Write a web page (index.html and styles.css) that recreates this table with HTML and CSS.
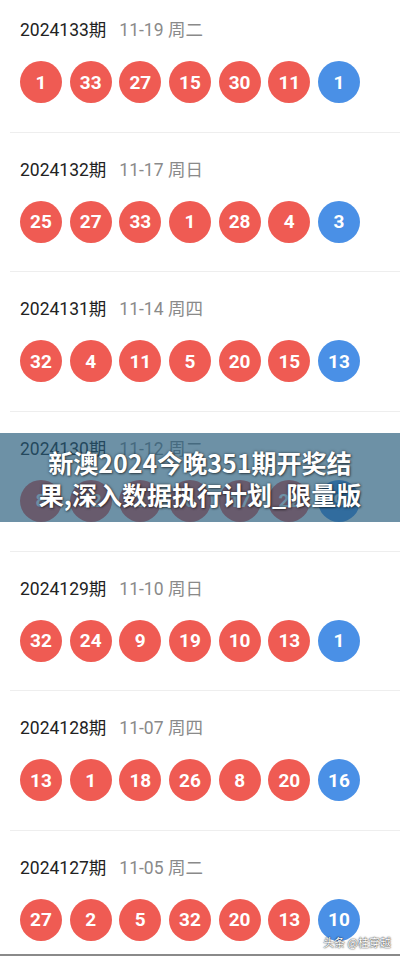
FILE: index.html
```html
<!DOCTYPE html>
<html lang="zh-CN">
<head>
<meta charset="utf-8">
<link rel="stylesheet" href="styles.css">
</head>
<body>
<div class="page">
  <ul class="draws">
    <li class="draw">
      <div class="head"><span class="issue">2024133期</span><span class="date">11-19 周二</span></div>
      <div class="balls"><span class="ball">1</span><span class="ball">33</span><span class="ball">27</span><span class="ball">15</span><span class="ball">30</span><span class="ball">11</span><span class="ball blue">1</span></div>
    </li>
    <li class="draw">
      <div class="head"><span class="issue">2024132期</span><span class="date">11-17 周日</span></div>
      <div class="balls"><span class="ball">25</span><span class="ball">27</span><span class="ball">33</span><span class="ball">1</span><span class="ball">28</span><span class="ball">4</span><span class="ball blue">3</span></div>
    </li>
    <li class="draw">
      <div class="head"><span class="issue">2024131期</span><span class="date">11-14 周四</span></div>
      <div class="balls"><span class="ball">32</span><span class="ball">4</span><span class="ball">11</span><span class="ball">5</span><span class="ball">20</span><span class="ball">15</span><span class="ball blue">13</span></div>
    </li>
    <li class="draw">
      <div class="head"><span class="issue">2024130期</span><span class="date">11-12 周二</span></div>
      <div class="balls"><span class="ball">8</span><span class="ball">12</span><span class="ball">3</span><span class="ball">6</span><span class="ball">17</span><span class="ball">22</span><span class="ball blue">9</span></div>
    </li>
    <li class="draw">
      <div class="head"><span class="issue">2024129期</span><span class="date">11-10 周日</span></div>
      <div class="balls"><span class="ball">32</span><span class="ball">24</span><span class="ball">9</span><span class="ball">19</span><span class="ball">10</span><span class="ball">13</span><span class="ball blue">1</span></div>
    </li>
    <li class="draw">
      <div class="head"><span class="issue">2024128期</span><span class="date">11-07 周四</span></div>
      <div class="balls"><span class="ball">13</span><span class="ball">1</span><span class="ball">18</span><span class="ball">26</span><span class="ball">8</span><span class="ball">20</span><span class="ball blue">16</span></div>
    </li>
    <li class="draw">
      <div class="head"><span class="issue">2024127期</span><span class="date">11-05 周二</span></div>
      <div class="balls"><span class="ball">27</span><span class="ball">2</span><span class="ball">5</span><span class="ball">32</span><span class="ball">20</span><span class="ball">13</span><span class="ball blue">10</span></div>
    </li>
  </ul>
  <div class="banner">
    <span class="banner-line">新澳2024今晚351期开奖结</span>
    <span class="banner-line">果,深入数据执行计划_限量版</span>
  </div>
  <div class="watermark">头条 @桂穿越</div>
</div>
</body>
</html>
```

FILE: styles.css
```css
* { box-sizing: border-box; }
html, body {
  margin: 0;
  padding: 0;
  background: #ffffff;
}
body {
  font-family: Roboto, "Noto Sans CJK SC", sans-serif;
}
.page {
  position: relative;
  width: 400px;
  height: 956px;
  overflow: hidden;
  background: #ffffff;
  border-bottom: 2px solid #8a8a8a;
}
.draws {
  list-style: none;
  margin: -7px 0 0 0;
  padding: 0;
}
.draw {
  padding: 25px 0 28.67px 20px;
  margin-left: 10px;
  padding-left: 10px;
  border-bottom: 1px solid #eeeeee;
}
.head {
  display: flex;
  align-items: center;
  gap: 13px;
  height: 24px;
  font-size: 17.5px;
  line-height: 24px;
}
.issue { color: #222222; }
.date { color: #8a8a8a; }
.balls {
  display: flex;
  gap: 7.67px;
  margin-top: 19px;
}
.ball {
  width: 42px;
  height: 42px;
  border-radius: 50%;
  background: #ef5b53;
  color: #ffffff;
  font-weight: 700;
  font-size: 19px;
  display: flex;
  align-items: center;
  justify-content: center;
}
.ball.blue { background: #4a90e6; }
.banner {
  position: absolute;
  left: 0;
  right: 0;
  top: 433px;
  height: 89px;
  background: rgba(37, 91, 122, 0.67);
  display: flex;
  flex-direction: column;
  align-items: center;
  justify-content: center;
  font-family: "Noto Sans CJK SC", sans-serif;
  font-weight: 700;
  font-size: 25px;
  line-height: 32px;
  color: #ffffff;
  text-shadow: 0 0 3px rgba(0, 0, 0, 0.55), 1px 1px 2px rgba(0, 0, 0, 0.4);
}
.banner-line { display: block; white-space: nowrap; }
.watermark {
  position: absolute;
  right: 9px;
  bottom: 5px;
  font-family: "Noto Sans CJK SC", sans-serif;
  font-size: 11px;
  line-height: 14px;
  color: #ffffff;
  text-shadow: 0 0 2px rgba(0, 0, 0, 0.7), 0 0 1px rgba(0, 0, 0, 0.8);
}
```
